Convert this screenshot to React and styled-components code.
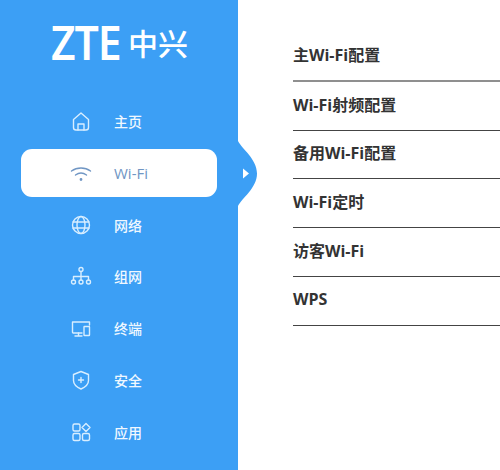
import React from "react";
import styled, { createGlobalStyle } from "styled-components";

const Global = createGlobalStyle`
  html, body {
    margin: 0;
    padding: 0;
    background: #fff;
    overflow: hidden;
  }
`;

const Page = styled.div`
  display: flex;
  width: 500px;
  height: 470px;
  font-family: "Open Sans", "Noto Sans CJK SC", sans-serif;
`;

const Sidebar = styled.aside`
  position: relative;
  flex: 0 0 238px;
  background: #3c9ff5;
  padding-top: 20px;
  box-sizing: border-box;
`;

const Logo = styled.div`
  display: flex;
  align-items: center;
  height: 44px;
  margin-left: 51px;
  margin-bottom: 31px;
  color: #fff;
  white-space: nowrap;
`;

const LogoLatin = styled.span`
  display: inline-block;
  width: 77px;
  font-family: "Noto Sans", sans-serif;
  font-size: 46px;
  font-weight: 600;
  line-height: 44px;
  letter-spacing: -1.2px;
  transform: scaleX(0.93);
  transform-origin: left center;
`;

const LogoCjk = styled.span`
  font-family: "Noto Sans CJK SC", sans-serif;
  font-size: 30px;
  font-weight: 500;
  line-height: 44px;
`;

const Nav = styled.nav`
  display: flex;
  flex-direction: column;
`;

const NavItem = styled.div`
  display: flex;
  align-items: center;
  height: ${(p) => (p.$active ? "48px" : "51.8px")};
  margin: ${(p) => (p.$active ? "2px 21px" : "0 21px")};
  padding-left: 49px;
  border-radius: 11px;
  background: ${(p) => (p.$active ? "#fff" : "transparent")};
  color: ${(p) => (p.$active ? "#7096c4" : "#f0f8ff")};
  font-size: ${(p) => (p.$active ? "15px" : "14px")};
  font-weight: ${(p) => (p.$active ? 400 : 500)};
`;

const NavIcon = styled.svg`
  flex: 0 0 22px;
  width: 22px;
  height: 22px;
  margin-right: 22px;
  fill: none;
  stroke: ${(p) => (p.$active ? "#7096c4" : "#d8eeff")};
  stroke-width: 1.4;
  stroke-linecap: round;
  stroke-linejoin: round;
`;

const Bump = styled.svg`
  position: absolute;
  left: 238px;
  top: 141px;
  width: 20px;
  height: 65px;
`;

const Content = styled.main`
  flex: 1;
  padding: 33px 0 0 55px;
`;

const ConfigRow = styled.div`
  display: flex;
  align-items: center;
  box-sizing: border-box;
  height: 48.8px;
  padding-bottom: 4px;
  border-bottom: ${(p) => (p.$first ? "2px solid #8f8f8f" : "1px solid #444")};
  color: #333;
  font-size: 16px;
  font-weight: 700;
`;

const icons = {
  home: (
    <>
      <path d="M3.500 9.500 11 3l7.500 6.500v8a2.500 2.500 0 0 1-2.500 2.500H6a2.500 2.500 0 0 1-2.500-2.500z" />
      <path d="M8 20v-6h6v6" />
    </>
  ),
  wifi: (
    <>
      <path d="M1.500 9c5.500-4 13.500-4 19 0" />
      <path d="M5.500 13c3.500-2.500 7.500-2.500 11 0" />
      <circle cx="11" cy="17.500" r="0.7" />
    </>
  ),
  globe: (
    <>
      <circle cx="11" cy="11" r="8.500" />
      <ellipse cx="11" cy="11" rx="4" ry="8.500" />
      <path d="M3 8h16M3 14h16" />
    </>
  ),
  tree: (
    <>
      <circle cx="11" cy="4.500" r="2" />
      <circle cx="3.500" cy="17" r="2" />
      <circle cx="11" cy="17" r="2" />
      <circle cx="18.500" cy="17" r="2" />
      <path d="M11 6.500V15M3.500 15v-3.500h15V15" />
    </>
  ),
  devices: (
    <>
      <path d="M12 16H3.500a1 1 0 0 1-1-1V5h17v3" />
      <path d="M5 19h7M8.500 16v3" />
      <rect x="14" y="9.500" width="5.500" height="9" rx="0.500" />
    </>
  ),
  shield: (
    <>
      <path d="M11 2.500 18.500 5.500v6c0 4-3 6.500-7.500 8.500-4.500-2-7.500-4.500-7.500-8.500v-6z" />
      <path d="M11 8.500v5M8.500 11h5" />
    </>
  ),
  apps: (
    <>
      <rect x="3" y="3" width="7" height="7" rx="1.500" />
      <rect x="3" y="12.500" width="7" height="7" rx="1.500" />
      <rect x="12.500" y="12.500" width="7" height="7" rx="1.500" />
      <path d="M16 2.500 20 6.500 16 10.500 12 6.500z" />
    </>
  ),
};

const navItems = [
  { label: "主页", icon: "home" },
  { label: "Wi-Fi", icon: "wifi", active: true },
  { label: "网络", icon: "globe" },
  { label: "组网", icon: "tree" },
  { label: "终端", icon: "devices" },
  { label: "安全", icon: "shield" },
  { label: "应用", icon: "apps" },
];

const configItems = [
  "主Wi-Fi配置",
  "Wi-Fi射频配置",
  "备用Wi-Fi配置",
  "Wi-Fi定时",
  "访客Wi-Fi",
  "WPS",
];

export default function App() {
  return (
    <Page>
      <Global />
      <Sidebar>
        <Logo>
          <LogoLatin>ZTE</LogoLatin>
          <LogoCjk>中兴</LogoCjk>
        </Logo>
        <Nav>
          {navItems.map((item) => (
            <NavItem key={item.label} $active={item.active}>
              <NavIcon viewBox="0 0 22 22" $active={item.active}>
                {icons[item.icon]}
              </NavIcon>
              {item.label}
            </NavItem>
          ))}
        </Nav>
        <Bump viewBox="0 0 20 65">
          <path d="M0 0C4 8 19 18 19 32.500S4 57 0 65z" fill="#3c9ff5" />
          <path d="M5 27.500 11 32.500 5 37.500z" fill="#fff" />
        </Bump>
      </Sidebar>
      <Content>
        {configItems.map((item, i) => (
          <ConfigRow key={item} $first={i === 0}>
            {item}
          </ConfigRow>
        ))}
      </Content>
    </Page>
  );
}
